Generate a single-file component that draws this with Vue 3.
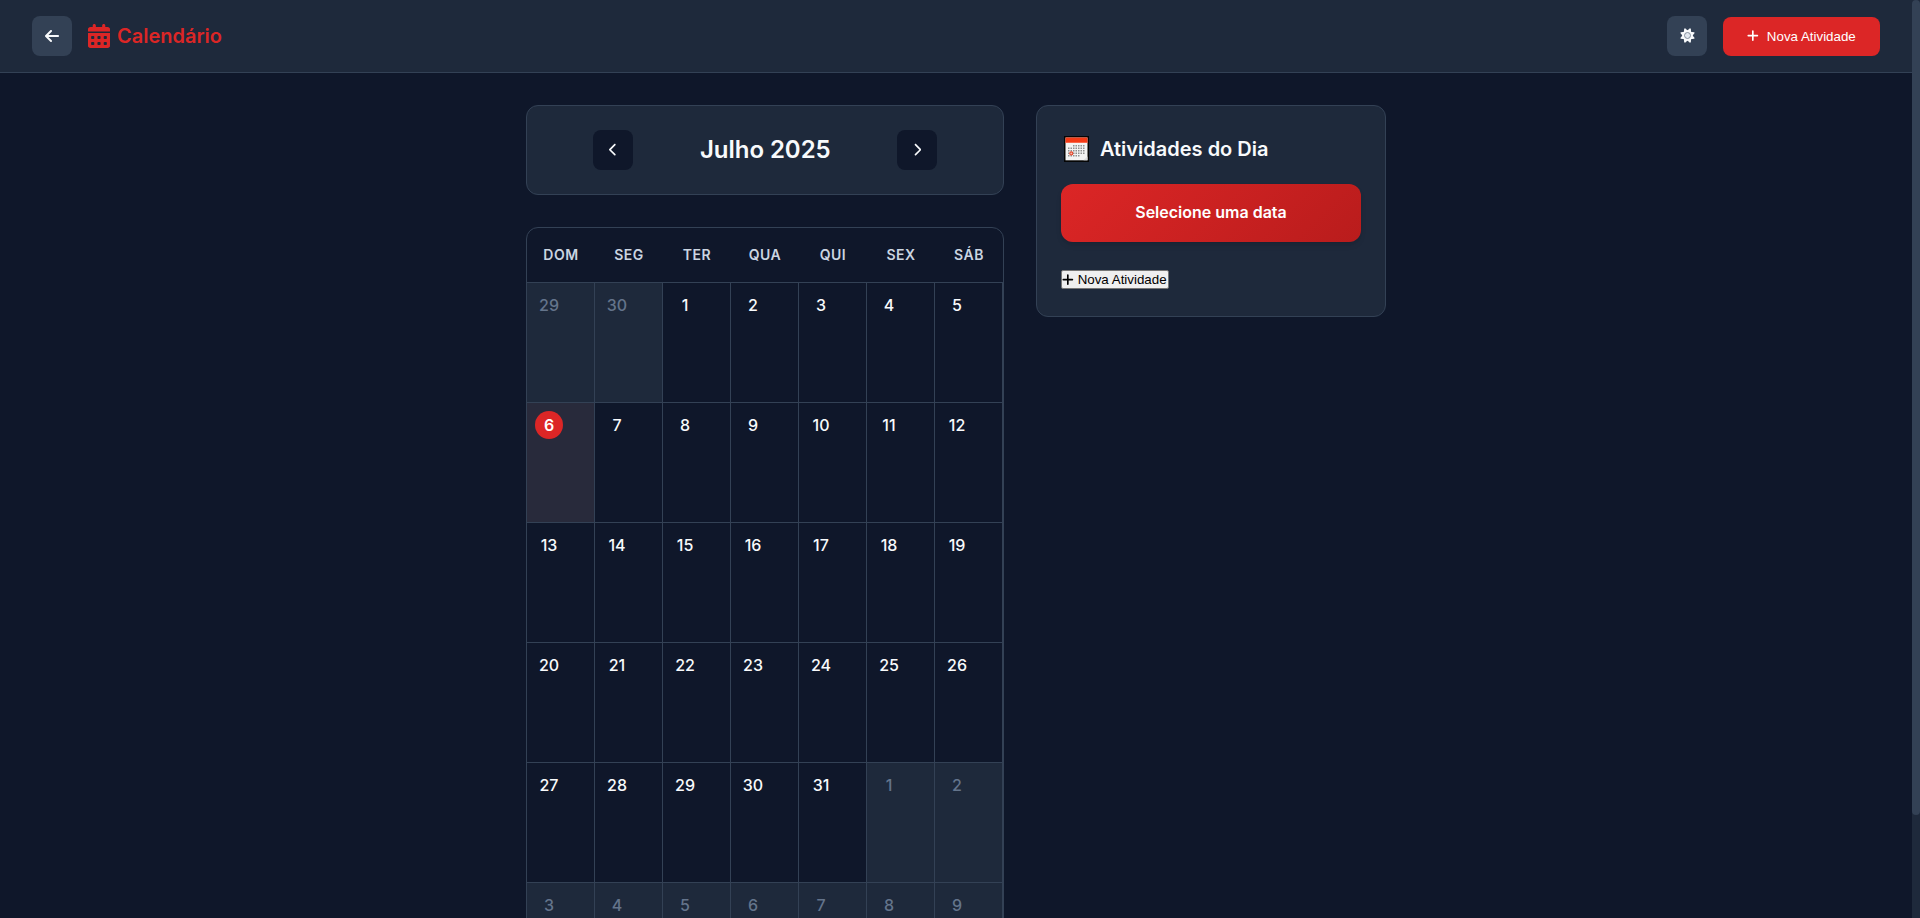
<script setup>
const weekdays = ['DOM', 'SEG', 'TER', 'QUA', 'QUI', 'SEX', 'SÁB']

const days = [
  ...[29, 30].map((n) => ({ n, other: true })),
  ...Array.from({ length: 31 }, (_, i) => ({ n: i + 1, today: i === 5 })),
  ...Array.from({ length: 9 }, (_, i) => ({ n: i + 1, other: true })),
]

const rays = [0, 45, 90, 135, 180, 225, 270, 315]

const dots = []
for (let r = 0; r < 5; r++) {
  for (let c = 0; c < 7; c++) {
    if ((r === 0 && c < 2) || (r === 4 && c > 4)) continue
    dots.push({ x: 4 + c * 2.5, y: 9 + r * 2.5 })
  }
}

const plus =
  'M256 80c0-17.7-14.3-32-32-32s-32 14.3-32 32l0 144L48 224c-17.7 0-32 14.3-32 32s14.3 32 32 32l144 0 0 144c0 17.7 14.3 32 32 32s32-14.3 32-32l0-144 144 0c17.7 0 32-14.3 32-32s-14.3-32-32-32l-144 0 0-144z'
</script>

<template>
  <div class="viewport">
    <div class="page">
      <header class="header">
        <div class="left">
          <button class="icon-btn">
            <svg width="14" height="16" viewBox="0 0 448 512" fill="currentColor"><path d="M9.4 233.4c-12.5 12.5-12.5 32.8 0 45.3l160 160c12.5 12.5 32.8 12.5 45.3 0s12.5-32.8 0-45.3L109.2 288 416 288c17.7 0 32-14.3 32-32s-14.3-32-32-32l-306.7 0L214.6 118.6c12.5-12.5 12.5-32.8 0-45.3s-32.8-12.5-45.3 0l-160 160z" /></svg>
          </button>
          <div class="logo">
            <svg width="22" height="24" viewBox="0 0 448 512" preserveAspectRatio="none" fill="currentColor" fill-rule="evenodd"><path d="M128 0c17.7 0 32 14.3 32 32v32h128V32c0-17.700 14.300-32 32-32s32 14.300 32 32v32h48c26.500 0 48 21.500 48 48v48H0v-48C0 85.500 21.500 64 48 64h48V32c0-17.700 14.300-32 32-32zM0 192h448v272c0 26.500-21.500 48-48 48H48c-26.500 0-48-21.500-48-48V192zM80 256a16 16 0 0 0-16 16v32a16 16 0 0 0 16 16h32a16 16 0 0 0 16-16v-32a16 16 0 0 0-16-16zM208 256a16 16 0 0 0-16 16v32a16 16 0 0 0 16 16h32a16 16 0 0 0 16-16v-32a16 16 0 0 0-16-16zM336 256a16 16 0 0 0-16 16v32a16 16 0 0 0 16 16h32a16 16 0 0 0 16-16v-32a16 16 0 0 0-16-16zM80 384a16 16 0 0 0-16 16v32a16 16 0 0 0 16 16h32a16 16 0 0 0 16-16v-32a16 16 0 0 0-16-16zM208 384a16 16 0 0 0-16 16v32a16 16 0 0 0 16 16h32a16 16 0 0 0 16-16v-32a16 16 0 0 0-16-16zM336 384a16 16 0 0 0-16 16v32a16 16 0 0 0 16 16h32a16 16 0 0 0 16-16v-32a16 16 0 0 0-16-16z" /></svg>
            <span>Calendário</span>
          </div>
        </div>
        <div class="right">
          <button class="icon-btn">
            <svg class="sun" width="15" height="15" viewBox="-7 -7 14 14">
              <path v-for="a in rays" :key="a" d="M-2.2 -3.6L-0.5 -7H0.5L2.2 -3.6Z" :transform="`rotate(${a + 22.5})`" fill="#f8fafc" />
              <circle r="4.700" fill="#f8fafc" />
              <circle r="2.800" fill="#e2e8f0" stroke="#74808f" stroke-width=".8" />
            </svg>
          </button>
          <button class="primary">
            <svg width="11.660" height="13.330" viewBox="0 0 448 512" fill="currentColor"><path :d="plus" /></svg>
            <span>Nova Atividade</span>
          </button>
        </div>
      </header>

      <main class="main">
        <section class="calendar-col">
          <div class="card month-nav">
            <button class="icon-btn dark">
              <svg width="8.330" height="13.330" viewBox="0 0 320 512" fill="currentColor"><path d="M9.400 233.400c-12.500 12.500-12.500 32.800 0 45.300l192 192c12.500 12.500 32.800 12.500 45.300 0s12.500-32.800 0-45.300L77.300 256 246.600 86.600c12.500-12.500 12.500-32.800 0-45.300s-32.800-12.500-45.300 0l-192 192z" /></svg>
            </button>
            <h2>Julho 2025</h2>
            <button class="icon-btn dark">
              <svg width="8.330" height="13.330" viewBox="0 0 320 512" fill="currentColor"><path d="M310.600 233.400c12.500 12.500 12.500 32.800 0 45.300l-192 192c-12.500 12.500-32.800 12.500-45.300 0s-12.500-32.800 0-45.300L242.700 256 73.400 86.600c-12.500-12.500-12.500-32.800 0-45.300s32.800-12.500 45.300 0l192 192z" /></svg>
            </button>
          </div>

          <div class="calendar">
            <div class="weekdays">
              <div v-for="w in weekdays" :key="w">{{ w }}</div>
            </div>
            <div class="days">
              <div v-for="(d, i) in days" :key="i" class="day" :class="{ other: d.other, today: d.today }">
                <span class="num">{{ d.n }}</span>
              </div>
            </div>
          </div>
        </section>

        <aside class="card activities">
          <h3>
            <svg width="25" height="26" viewBox="0 0 25 26">
              <rect width="25" height="26" fill="#050505" />
              <rect x="1.500" y="1.500" width="22" height="22.800" fill="#f3f3f3" />
              <rect x="1.500" y="1.500" width="22" height="5.500" fill="#f43a16" />
              <rect x="1.500" y="6" width="22" height="1" fill="#f9684c" />
              <rect v-for="(p, i) in dots" :key="i" :x="p.x" :y="p.y" width="1.500" height="1.500" fill="#8f8f8f" />
              <circle cx="7.300" cy="17.400" r="1.500" fill="#f6b9ac" stroke="#e8472b" stroke-width="1.100" />
              <path d="M19.500 24.300L23.500 20.500V24.300Z" fill="#dcdcdc" />
            </svg>
            <span>Atividades do Dia</span>
          </h3>
          <div class="selected">Selecione uma data</div>
          <button class="plain">
            <svg width="11.660" height="13.330" viewBox="0 0 448 512" fill="currentColor"><path :d="plus" /></svg>
            <span>Nova Atividade</span>
          </button>
        </aside>
      </main>
    </div>
    <div class="scroll-track"><div class="scroll-thumb"></div></div>
  </div>
</template>

<style>
body { background: #0f172a; overflow: hidden; }
</style>

<style scoped>
* { box-sizing: border-box; margin: 0; }
.viewport {
  display: flex;
  height: 918px;
  overflow: hidden;
  background: #0f172a;
  color: #f8fafc;
  font-family: Inter, 'Liberation Sans', sans-serif;
}
.page { flex: 1; min-width: 0; overflow: hidden; }
.scroll-track { width: 8px; background: #1e293b; }
.scroll-thumb { height: 815px; background: #334155; border-radius: 4px; }
svg { display: block; flex: none; }
button { border: 0; padding: 0; color: inherit; font: 13.333px 'Liberation Sans', Arial, sans-serif; }

.header {
  height: 73px;
  padding: 0 32px;
  display: flex;
  align-items: center;
  justify-content: space-between;
  background: #1e293b;
  border-bottom: 1px solid #334155;
}
.left, .right { display: flex; align-items: center; gap: 16px; }
.icon-btn {
  width: 40px;
  height: 40px;
  display: flex;
  align-items: center;
  justify-content: center;
  border-radius: 8px;
  background: #334155;
}
.icon-btn.dark { background: #0f172a; }
.sun { margin-bottom: 2px; margin-left: 1px; }
.logo { display: flex; align-items: center; gap: 7px; color: #dc2626; font-size: 20px; font-weight: 600; line-height: 24px; }
.primary {
  height: 39px;
  width: 157px;
  display: flex;
  align-items: center;
  justify-content: center;
  gap: 8px;
  border-radius: 8px;
  background: #dc2626;
  color: #fff;
  margin-top: 1px;
}
.primary svg { margin-bottom: 1px; }

.main {
  width: 860px;
  margin: 32px auto 0;
  display: flex;
  align-items: flex-start;
  gap: 32px;
}
.calendar-col { width: 478px; display: flex; flex-direction: column; gap: 32px; }
.card { background: #1e293b; border: 1px solid #334155; border-radius: 12px; }
.month-nav { height: 90px; display: flex; align-items: center; justify-content: center; gap: 67px; }
.month-nav h2 { width: 130px; padding-bottom: 2px; text-align: center; font-size: 24px; font-weight: 600; letter-spacing: -0.05px; white-space: nowrap; }

.calendar { border: 1px solid #334155; border-radius: 12px; overflow: hidden; }
.weekdays {
  display: grid;
  grid-template-columns: repeat(7, 1fr);
  height: 55px;
  line-height: 54px;
  border-bottom: 1px solid #334155;
  text-align: center;
  font-size: 14px;
  font-weight: 600;
  letter-spacing: 0.5px;
  color: #cbd5e1;
}
.days { display: grid; grid-template-columns: repeat(7, 1fr); grid-auto-rows: 120px; }
.day {
  padding: 8px;
  border-right: 1px solid #334155;
  border-bottom: 1px solid #334155;
  font-size: 16px;
  font-weight: 500;
}
.num {
  width: 28px;
  height: 28px;
  display: flex;
  align-items: center;
  justify-content: center;
  border-radius: 50%;
}
.other { background: #1e293b; color: #64748b; }
.today { background: #282a3b; font-weight: 600; }
.today .num { background: #dc2626; color: #fff; }

.activities { width: 350px; height: 212px; padding: 24px; }
.activities h3 { display: flex; align-items: center; gap: 11px; height: 38px; padding-left: 3px; font-size: 20px; font-weight: 600; }
.selected {
  height: 58px;
  margin-top: 16px;
  line-height: 57px;
  text-align: center;
  border-radius: 12px;
  background: linear-gradient(135deg, #dc2626, #b91c1c);
  box-shadow: 0 4px 6px -1px rgba(0, 0, 0, 0.1), 0 2px 4px -2px rgba(0, 0, 0, 0.1);
  font-size: 16px;
  font-weight: 600;
  color: #fff;
}
.plain {
  display: flex;
  align-items: center;
  gap: 4px;
  width: 108px;
  height: 19px;
  margin-top: 28px;
  border: 1px solid #767676;
  border-radius: 2px;
  background: #efefef;
  color: #000;
  white-space: nowrap;
}
</style>
